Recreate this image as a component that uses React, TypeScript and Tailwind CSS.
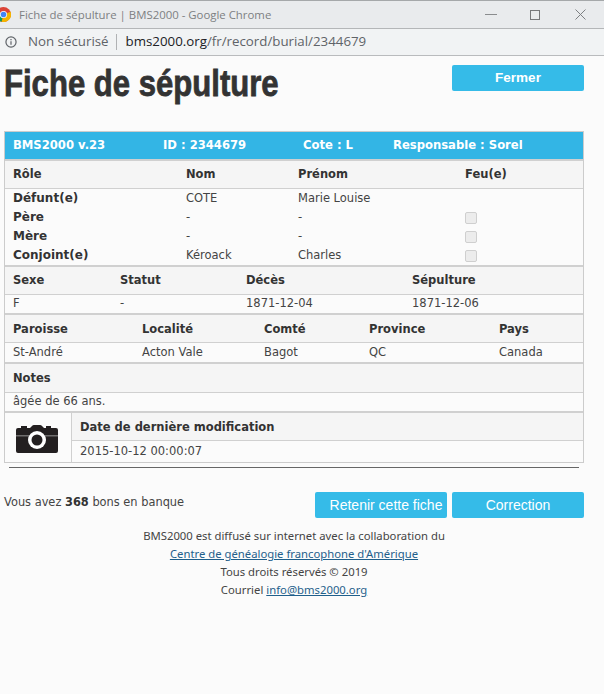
const verdana = "font-['DejaVu_Sans',sans-serif]";

function HeadRow({ cols, height = "h-[28px]" }: { cols: [string, string][]; height?: string }) {
  return (
    <div className={`flex items-center px-[8px] ${height} bg-[#f5f5f5] border-b border-[#d0d0d0] text-[11.500px] font-bold text-[#333]`}>
      {cols.map(([label, w]) => (
        <div key={label} className={w}>{label}</div>
      ))}
    </div>
  );
}

function ValueRow({ cols, height = "h-[20px]", thick = true }: { cols: [string, string][]; height?: string; thick?: boolean }) {
  return (
    <div className={`flex items-center px-[8px] ${height} text-[11.500px] text-[#444] ${thick ? "border-b-2 border-[#d0d0d0]" : ""}`}>
      {cols.map(([label, w], i) => (
        <div key={i} className={w}>{label}</div>
      ))}
    </div>
  );
}

function PersonRow({ role, nom, prenom, check }: { role: string; nom: string; prenom: string; check?: boolean }) {
  return (
    <div className="flex items-center px-[8px] h-[19px] text-[11.500px] text-[#444]">
      <div className="w-[173px] -mt-[2px] text-[12px] font-bold text-[#333]">{role}</div>
      <div className="w-[112px]">{nom}</div>
      <div className="w-[167px]">{prenom}</div>
      {check && <div className="w-[12px] h-[12px] rounded-[2px] border border-[#cfcfcf] bg-[#ececec]" />}
    </div>
  );
}

function ChromeLogo() {
  return (
    <svg width="15" height="15" viewBox="0 0 16 16" className="-ml-[4px] shrink-0">
      <circle cx="8" cy="8" r="8" fill="#db4437" />
      <path d="M8 8 L1 4 A8 8 0 0 0 6 15.8 Z" fill="#0f9d58" />
      <path d="M8 8 L15.5 5 A8 8 0 0 1 6 15.8 Z" fill="#f4b400" />
      <circle cx="8" cy="8" r="3.8" fill="#fff" />
      <circle cx="8" cy="8" r="3" fill="#4285f4" />
    </svg>
  );
}

function Camera() {
  return (
    <svg width="42" height="32" viewBox="0 0 42 32">
      <path d="M2 6h3V4h6v2h3l2-2q.7-1 2-1h6q1.300 0 2 1l2 2h2V4h5v2h5q2 0 2 2v21q0 2-2 2H2q-2 0-2-2V8q0-2 2-2z" fill="#231f20" />
      <rect x="0" y="13" width="42" height="1.500" fill="#fff" opacity="0.35" />
      <circle cx="21" cy="18" r="9" fill="#fff" />
      <circle cx="21" cy="18" r="5.500" fill="#231f20" />
    </svg>
  );
}

function BlueButton({ label, className }: { label: string; className: string }) {
  return (
    <button className={`w-[132px] h-[26px] rounded-[2px] bg-[#35bbe8] text-white font-['Liberation_Sans',sans-serif] ${className}`}>
      {label}
    </button>
  );
}

export default function App() {
  return (
    <div className={`w-[604px] h-[694px] overflow-hidden bg-[#fbfbfb] ${verdana}`}>
      {/* browser title bar */}
      <div className="h-[29px] flex items-center bg-[#e9ebed] border-t border-[#a5a8aa] border-b border-b-[#b4b6b8] text-[#7d7f82]">
        <ChromeLogo />
        <span className="ml-[8px] font-['Open_Sans',sans-serif] text-[11.400px]">Fiche de sépulture | BMS2000 - Google Chrome</span>
        <div className="ml-auto flex items-center pr-[18px]">
          <div className="w-[12px] h-px bg-[#8a8c8e]" />
          <div className="ml-[33px] w-[10px] h-[10px] border border-[#77797b]" />
          <svg width="11" height="11" viewBox="0 0 11 11" stroke="#7d7f82" fill="none" className="ml-[35px]"><path d="M.5.5l10 10M10.500.5l-10 10" /></svg>
        </div>
      </div>
      {/* address bar */}
      <div className="h-[27px] flex items-center px-[5px] bg-[#f1f3f4] border-b border-[#b9bbbd] font-['Open_Sans',sans-serif] text-[13.300px] text-[#5f6368]">
        <svg width="12" height="12" viewBox="0 0 13 13" fill="none" stroke="#5f6368" strokeWidth="1.300">
          <circle cx="6.500" cy="6.500" r="5.500" />
          <path d="M6.500 5.800v3.700M6.500 3.300v1.200" />
        </svg>
        <span className="ml-[11px]">Non sécurisé</span>
        <div className="w-px h-[16px] bg-[#b0b2b4] ml-[7px] mr-[9px]" />
        <span className="text-[#202124]">bms2000.org</span>
        <span>/fr/record/burial/2344679</span>
      </div>

      <div className="px-[4px]">
        <div className="flex justify-between pr-[16px] h-[75px]">
          <h1 className="origin-left scale-x-[0.84] whitespace-nowrap font-['Liberation_Sans',sans-serif] text-[37px] leading-[56px] font-bold text-[#333] [-webkit-text-stroke:0.8px_#333]">Fiche de sépulture</h1>
          <BlueButton label="Fermer" className="mt-[9px] text-[13.500px] font-bold" />
        </div>

        <div className="w-[580px] border border-[#cccccc]">
          <div className="flex items-center h-[27px] px-[8px] bg-[#33b5e5] text-[11.600px] font-bold text-white">
            <div className="w-[150px]">BMS2000 v.23</div>
            <div className="w-[140px]">ID : 2344679</div>
            <div className="w-[90px]">Cote : L</div>
            <div>Responsable : Sorel</div>
          </div>
          <div className="border-t-2 border-[#d0d0d0]" />
          <HeadRow cols={[["Rôle", "w-[173px]"], ["Nom", "w-[112px]"], ["Prénom", "w-[167px]"], ["Feu(e)", "w-[80px]"]]} />
          <PersonRow role="Défunt(e)" nom="COTE" prenom="Marie Louise" />
          <PersonRow role="Père" nom="-" prenom="-" check />
          <PersonRow role="Mère" nom="-" prenom="-" check />
          <PersonRow role="Conjoint(e)" nom="Kéroack" prenom="Charles" check />
          <div className="border-t-2 border-[#d0d0d0]" />
          <HeadRow cols={[["Sexe", "w-[107px]"], ["Statut", "w-[126px]"], ["Décès", "w-[166px]"], ["Sépulture", "w-[120px]"]]} />
          <ValueRow cols={[["F", "w-[107px]"], ["-", "w-[126px]"], ["1871-12-04", "w-[166px]"], ["1871-12-06", "w-[120px]"]]} />
          <HeadRow height="h-[28px] pt-[2px]" cols={[["Paroisse", "w-[129px]"], ["Localité", "w-[122px]"], ["Comté", "w-[105px]"], ["Province", "w-[130px]"], ["Pays", "w-[60px]"]]} />
          <ValueRow height="h-[21px]" cols={[["St-André", "w-[129px]"], ["Acton Vale", "w-[122px]"], ["Bagot", "w-[105px]"], ["QC", "w-[130px]"], ["Canada", "w-[60px]"]]} />
          <HeadRow height="h-[29px] pt-[1px]" cols={[["Notes", "w-[200px]"]]} />
          <ValueRow cols={[["âgée de 66 ans.", "w-[200px]"]]} />
          <div className="flex">
            <div className="w-[67px] flex items-center justify-center border-r border-[#d0d0d0] pr-[2px]">
              <Camera />
            </div>
            <div className="flex-1">
              <HeadRow height="h-[28px] pt-[2px]" cols={[["Date de dernière modification", "w-[300px]"]]} />
              <ValueRow height="h-[21px]" cols={[["2015-10-12 00:00:07", "w-[300px]"]]} thick={false} />
            </div>
          </div>
        </div>

        <div className="mt-[4px] mx-[5px] w-[570px] border-t border-[#666]" />

        <div className="flex items-center mt-[24px] pr-[16px]">
          <div className="text-[11.400px] text-[#444] -mt-[4px]">Vous avez <b className="text-[#333]">368</b> bons en banque</div>
          <div className="ml-auto flex gap-[5px]">
            <BlueButton label="Retenir cette fiche" className="pl-[10px] text-[14px]" />
            <BlueButton label="Correction" className="text-[14px]" />
          </div>
        </div>

        <div className="mt-[9px] w-[580px] text-center font-['Noto_Sans',sans-serif] text-[11.300px] leading-[18px] text-[#444]">
          <div>BMS2000 est diffusé sur internet avec la collaboration du</div>
          <div><a className="underline text-[#1f5f8b]">Centre de généalogie francophone d'Amérique</a></div>
          <div>Tous droits réservés © 2019</div>
          <div>Courriel <a className="underline text-[#1f5f8b]">info@bms2000.org</a></div>
        </div>
      </div>
    </div>
  );
}
